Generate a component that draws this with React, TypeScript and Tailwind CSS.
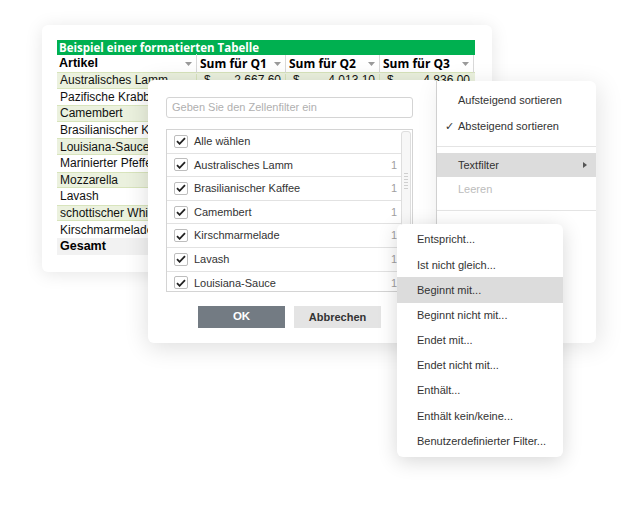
import React from "react";

const rows = [
  { name: "Australisches Lamm", green: true, q1: "2.667,60", q2: "4.013,10", q3: "4.836,00" },
  { name: "Pazifische Krabbe", green: false },
  { name: "Camembert", green: true },
  { name: "Brasilianischer Kaffee", green: false },
  { name: "Louisiana-Sauce", green: true },
  { name: "Marinierter Pfeffer", green: false },
  { name: "Mozzarella", green: true },
  { name: "Lavash", green: false },
  { name: "schottischer Whisky", green: true },
  { name: "Kirschmarmelade", green: false },
];

const filterItems = [
  { label: "Alle wählen", count: "" },
  { label: "Australisches Lamm", count: "1" },
  { label: "Brasilianischer Kaffee", count: "1" },
  { label: "Camembert", count: "1" },
  { label: "Kirschmarmelade", count: "1" },
  { label: "Lavash", count: "1" },
  { label: "Louisiana-Sauce", count: "1" },
];

const textFilters = [
  "Entspricht...",
  "Ist nicht gleich...",
  "Beginnt mit...",
  "Beginnt nicht mit...",
  "Endet mit...",
  "Endet nicht mit...",
  "Enthält...",
  "Enthält kein/keine...",
  "Benutzerdefinierter Filter...",
];

// small grey dropdown arrow in the table header
const HeaderArrow = () => (
  <span className="flex h-[14px] w-[12px] items-center justify-center">
    <svg width="7" height="4" viewBox="0 0 7 4">
      <path d="M0 0h7L3.5 4z" fill="#9a9a9a" />
    </svg>
  </span>
);

const Check = () => (
  <svg width="10" height="8" viewBox="0 0 10 8">
    <path d="M1 4.2l2.6 2.6L9 1.2" fill="none" stroke="#222" strokeWidth="1.8" />
  </svg>
);

const SheetCard = () => (
  <div className="absolute left-[42px] top-[25px] h-[247px] w-[450px] rounded-md bg-white shadow-[0_2px_18px_rgba(0,0,0,0.10)]">
    <div className="ml-[15px] mt-[15px] w-[418px]">
      <div className="flex h-[15px] items-center bg-[#00b050] pl-[2px] font-['Open_Sans',sans-serif] text-[11.5px] font-bold leading-none text-white">
        Beispiel einer formatierten Tabelle
      </div>
      <div className="flex h-[17px] items-center text-black">
        <div className="flex w-[140px] items-center justify-between border-r border-[#d9d9d9] pl-[2px] pr-[2px] font-['Liberation_Sans',sans-serif] text-[12.5px] font-bold">
          Artikel
          <HeaderArrow />
        </div>
        {["Sum für Q1", "Sum für Q2", "Sum für Q3"].map((h, i) => (
          <div
            key={h}
            className={`flex items-center justify-between border-r border-[#d9d9d9] pl-[3px] pr-[2px] font-['Open_Sans',sans-serif] text-[12px] font-bold ${i === 0 ? "w-[89px]" : "w-[94px]"}`}
          >
            {h}
            <HeaderArrow />
          </div>
        ))}
      </div>
      {rows.map((r) => (
        <div
          key={r.name}
          className={`flex h-[16.6px] items-center font-['Liberation_Sans',sans-serif] text-[12px] leading-none text-[#111] ${r.green ? "border-y border-[#d8e4bc] bg-[#ebf1de]" : ""}`}
        >
          <div className="w-[140px] border-r border-[#d8e4bc] pl-[3px]">{r.name}</div>
          {r.q1 && (
            <>
              <div className="flex w-[89px] justify-between border-r border-[#d8e4bc] pl-[7px] pr-[4px]">
                <span>$</span>
                <span>{r.q1}</span>
              </div>
              <div className="flex w-[94px] justify-between border-r border-[#d8e4bc] pl-[7px] pr-[4px]">
                <span>$</span>
                <span>{r.q2}</span>
              </div>
              <div className="flex w-[94px] justify-between pl-[7px] pr-[4px]">
                <span>$</span>
                <span>{r.q3}</span>
              </div>
            </>
          )}
        </div>
      ))}
      <div className="flex h-[17px] w-[140px] items-center bg-[#f2f2f2] pl-[3px] font-['Liberation_Sans',sans-serif] text-[12.5px] font-bold">
        Gesamt
      </div>
    </div>
  </div>
);

const FilterDialog = () => (
  <div className="absolute left-[148px] top-[80px] h-[263px] w-[292px] rounded-md bg-white font-['Liberation_Sans',sans-serif] shadow-[0_4px_24px_rgba(0,0,0,0.14)]">
    <div className="ml-[18px] mt-[17px] flex h-[21px] w-[247px] items-center rounded-[3px] border border-[#d4d4d4] pl-[5px] text-[11px] text-[#b0b0b0]">
      Geben Sie den Zellenfilter ein
    </div>
    <div className="relative ml-[18px] mt-[11px] h-[163px] w-[247px] overflow-hidden border border-[#d4d4d4]">
      {filterItems.map((f) => (
        <div
          key={f.label}
          className="flex h-[23.6px] w-[236px] shrink-0 items-center border-b border-[#e2e2e2] pl-[7px] pr-[6px] text-[11px] text-[#333]"
        >
          <span className="flex h-[13px] w-[14px] items-center justify-center rounded-[2px] border border-[#bdbdbd] bg-white">
            <Check />
          </span>
          <span className="ml-[6px] flex-1">{f.label}</span>
          <span className="text-[#a0a0a0]">{f.count}</span>
        </div>
      ))}
      {/* scrollbar */}
      <div className="absolute right-[1px] top-[1px] flex h-[159px] w-[10px] items-start justify-center rounded-[3px] border border-[#dedede] bg-[#f7f7f7]">
        <div className="mt-[41px] flex flex-col gap-[2px]">
          {[0, 1, 2, 3, 4, 5].map((i) => (
            <div key={i} className="h-px w-[4px] bg-[#cfcfcf]" />
          ))}
        </div>
      </div>
    </div>
    <div className="ml-[50px] mt-[14px] flex gap-[9px]">
      <button className="h-[22px] w-[87px] bg-[#737b83] text-[11.5px] font-bold text-white">OK</button>
      <button className="h-[22px] w-[87px] bg-[#e4e4e4] text-[11px] font-bold text-[#333]">Abbrechen</button>
    </div>
  </div>
);

const SortMenu = () => (
  <div className="absolute left-[436px] top-[81px] h-[262px] w-[160px] rounded-r-md border-l border-[#d0d0d0] bg-white font-['Liberation_Sans',sans-serif] text-[11px] text-[#333] shadow-[4px_4px_24px_rgba(0,0,0,0.10)]">
    <div className="pt-[7px]">
      <div className="flex h-[25px] items-center pl-[21px]">Aufsteigend sortieren</div>
      <div className="flex h-[26px] items-center pl-[8px]">
        <span className="w-[13px] text-[11px]">✓</span>Absteigend sortieren
      </div>
    </div>
    <div className="mt-[7px] border-t border-[#e4e4e4]" />
    <div className="mt-[6px] flex h-[24px] items-center justify-between bg-[#dcdcdc] pl-[21px] pr-[9px]">
      Textfilter
      <svg width="4" height="6" viewBox="0 0 4 6">
        <path d="M0 0l4 3-4 3z" fill="#555" />
      </svg>
    </div>
    <div className="flex h-[24px] items-center pl-[21px] text-[#bcbcbc]">Leeren</div>
    <div className="mt-[9px] border-t border-[#e4e4e4]" />
  </div>
);

const TextFilterMenu = () => (
  <div className="absolute left-[397px] top-[224px] h-[233px] w-[166px] rounded-md bg-white pt-[3px] font-['Liberation_Sans',sans-serif] text-[11px] text-[#333] shadow-[0_4px_20px_rgba(0,0,0,0.16)]">
    {textFilters.map((t) => (
      <div
        key={t}
        className={`flex h-[25.2px] items-center pl-[20px] ${t === "Beginnt mit..." ? "bg-[#dcdcdc]" : ""}`}
      >
        {t}
      </div>
    ))}
  </div>
);

export default function App() {
  return (
    <div className="relative h-[520px] w-[640px] overflow-hidden bg-white">
      <SheetCard />
      <FilterDialog />
      <SortMenu />
      <TextFilterMenu />
    </div>
  );
}
